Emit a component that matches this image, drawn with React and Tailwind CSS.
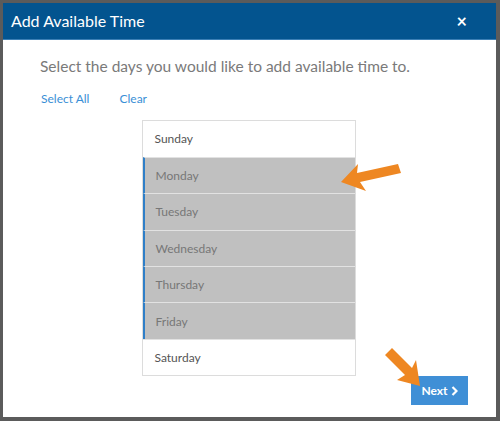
import React from "react";

const days = [
  { name: "Sunday", sel: false },
  { name: "Monday", sel: true },
  { name: "Tuesday", sel: true },
  { name: "Wednesday", sel: true },
  { name: "Thursday", sel: true },
  { name: "Friday", sel: true },
  { name: "Saturday", sel: false },
];

export default function App() {
  return (
    <div
      className="w-[500px] h-[421px] bg-[#5b5b5b] p-[3px] pb-[4px] relative overflow-hidden"
      style={{ fontFamily: "Lato, 'Open Sans', sans-serif" }}
    >
      <div className="w-[493px] h-[414px] bg-white flex flex-col">
        <div className="h-[37px] bg-[#03548f] flex items-center justify-between pl-[8px] pr-[29px] border-b border-[#3b7fb5]">
          <span className="text-white text-[16px] leading-none">Add Available Time</span>
          <span className="text-white text-[18px] font-bold leading-none">×</span>
        </div>
        <div className="flex flex-col pl-[37px]">
          <div className="mt-[19px] text-[15.5px] text-[#7a7a7a] leading-none">
            Select the days you would like to add available time to.
          </div>
          <div className="flex gap-[30px] mt-[18px] pl-[1px] text-[12px] text-[#3a8fd6] leading-none">
            <span>Select All</span>
            <span>Clear</span>
          </div>
        </div>
        <div className="flex justify-center mt-[15px] pr-[2px]">
          <div className="w-[214px] border border-[#dcdcdc] flex flex-col">
            {days.map((d, i) => (
              <div
                key={d.name}
                className={
                  "h-[36.4px] flex items-center text-[12px] pt-[1px] " +
                  (i > 0 ? "border-t border-[#e2e2e2] " : "") +
                  (d.sel
                    ? "bg-[#c0c0c0] border-l-2 border-l-[#2f7fc8] pl-[11px] text-[#777]"
                    : "bg-white pl-[12px] text-[#555]")
                }
              >
                {d.name}
              </div>
            ))}
          </div>
        </div>
        <div className="flex justify-end pr-[28px]">
          <div className="w-[57px] h-[29px] bg-[#3f8fd6] text-white text-[12px] font-bold flex items-center justify-center gap-[3px]">
            <span>Next</span>
            <svg width="7" height="10" viewBox="0 0 7 10">
              <path d="M1.5 1 L5.5 5 L1.5 9" stroke="white" strokeWidth="2.2" fill="none" />
            </svg>
          </div>
        </div>
      </div>
      <svg className="absolute left-0 top-0" width="500" height="421" viewBox="0 0 500 421">
        <g fill="#ee8722">
          <polygon points="341,182 358,164 357,173 398,164 401,173 360,182 366,191" />
          <polygon points="420,386 397,380 405,375 385,355 392,348 412,368 416,360" />
        </g>
      </svg>
    </div>
  );
}
